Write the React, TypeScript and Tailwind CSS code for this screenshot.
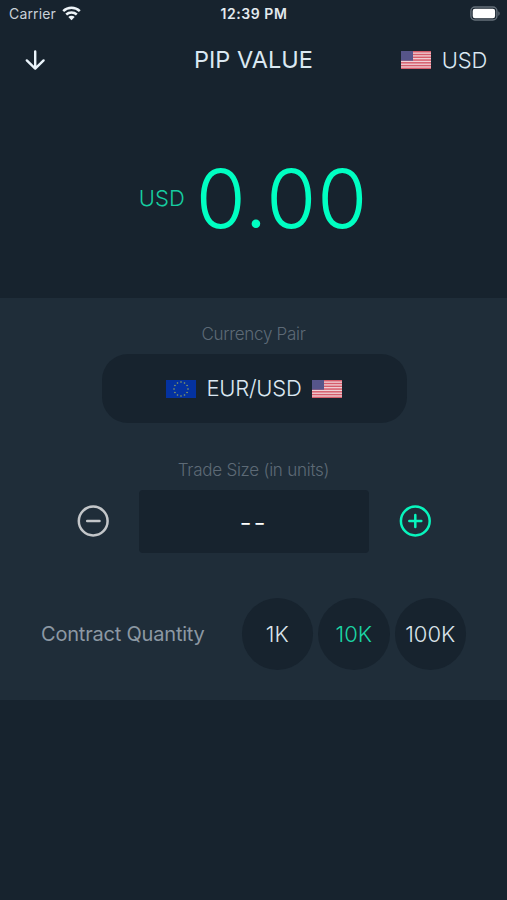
import { useState } from "react";

const quantities = ["1K", "10K", "100K"];

function UsFlag() {
  return (
    <svg width="30" height="18" viewBox="0 0 30 18" className="block shrink-0">
      <rect width="30" height="18" fill="#f0d3d8" />
      {[0, 1, 2, 3, 4, 5, 6].map((i) => (
        <rect key={i} y={i * 2.77} width="30" height="1.5" fill="#d65c6b" />
      ))}
      <rect width="12" height="9.7" fill="#56558a" />
    </svg>
  );
}

function EuFlag() {
  const stars = Array.from({ length: 12 }, (_, i) => (i * Math.PI) / 6);
  return (
    <svg width="30" height="18" viewBox="0 0 30 18" className="block shrink-0">
      <rect width="30" height="18" fill="#0432a0" />
      {stars.map((a) => (
        <circle key={a} cx={15 + 7 * Math.sin(a)} cy={9 - 7 * Math.cos(a)} r="0.8" fill="#93a35c" />
      ))}
    </svg>
  );
}

function StatusBar() {
  return (
    <div className="grid h-7 grid-cols-3 items-center pl-[9px] pr-[7px] text-[#e3eaef]">
      <div className="flex items-center gap-[6px]">
        <span className="text-[14px] leading-7 tracking-[0.15px] text-[#c9d1d8]">Carrier</span>
        <svg width="19" height="15" viewBox="0 0 19 15" fill="none" stroke="#eef4f8" strokeWidth="2.5" className="-mt-[2px]">
          <path d="M1.2 5.2a12 12 0 0 1 16.6 0" />
          <path d="M4.2 8.5a7.7 7.7 0 0 1 10.6 0" />
          <path d="M9.5 14.2L6.3 11a4.6 4.6 0 0 1 6.4 0z" fill="#eef4f8" stroke="none" />
        </svg>
      </div>
      <span className="-mx-2 pr-[1px] text-center text-[14px] font-semibold leading-7 tracking-[0.55px]">12:39 PM</span>
      <svg width="30" height="15" viewBox="0 0 30 15" className="-mt-[2px] justify-self-end">
        <rect x="0.9" y="1" width="26" height="13" rx="4" fill="none" stroke="#65707a" strokeWidth="1.4" />
        <rect x="2.7" y="2.8" width="22.4" height="9.4" rx="2.2" fill="#fff" />
        <path d="M28.3 5.2c1.8.8 1.8 3.8 0 4.6z" fill="#65707a" />
      </svg>
    </div>
  );
}

function Header() {
  return (
    <div className="grid h-16 grid-cols-[1fr_auto_1fr] items-center px-5 text-[#dbe8f2]">
      <button className="w-fit pl-[5px]">
        <svg width="21" height="21" viewBox="0 0 21 21" fill="none" stroke="#eaf4fb" strokeWidth="2.4" strokeLinecap="round" strokeLinejoin="round">
          <path d="M10.2 1.5v17M1.8 10.4l8.4 8.3 8.4-8.3" />
        </svg>
      </button>
      <h1 className="text-[23.5px] tracking-[0.05px]">PIP VALUE</h1>
      <div className="flex items-center justify-self-end gap-[11px]">
        <UsFlag />
        <span className="text-[22px] font-light tracking-[-0.25px]">USD</span>
      </div>
    </div>
  );
}

export default function App() {
  const [quantity, setQuantity] = useState("10K");

  return (
    <div className="flex h-[900px] w-[507px] flex-col bg-[#17232e] font-['Inter',sans-serif]">
      <StatusBar />
      <Header />

      <div className="flex h-[206px] items-center justify-center gap-[11px] pt-[7px] text-[#00ffc2]">
        <span className="text-[22px] font-light text-[#16cda0]">USD</span>
        <span className="pt-[2px] text-[81px] font-light leading-none tracking-[0.9px]">0.00</span>
      </div>

      <div className="flex h-[402px] flex-col items-center bg-[#1f2d39]">
        <p className="mt-[24px] h-6 text-[17px] font-light leading-6 tracking-[-0.3px] text-[#5d6a76]">Currency Pair</p>
        <button className="ml-px mt-[8px] flex h-[69px] w-[305px] items-center justify-center gap-[10px] rounded-[26px] bg-[#17232e] text-[#dbe8f2]">
          <EuFlag />
          <span className="text-[22px] font-light tracking-[-0.25px]">EUR/USD</span>
          <UsFlag />
        </button>

        <p className="mt-[35px] h-6 text-[17px] font-light leading-6 tracking-[-0.25px] text-[#5d6a76]">Trade Size (in units)</p>
        <div className="mt-[8px] flex items-center gap-[29px]">
          <button>
            <svg width="33" height="33" viewBox="0 0 33 33" fill="none" stroke="#c3c6c9" strokeWidth="2.5" strokeLinecap="round">
              <circle cx="16.2" cy="16" r="14.4" />
              <path d="M10.2 16h12.3" />
            </svg>
          </button>
          <div className="flex h-[63px] w-[230px] items-center justify-center rounded-[4px] bg-[#17232e] pt-[4px] text-[27px] font-light tracking-[1.8px] text-white">
            --
          </div>
          <button>
            <svg width="33" height="33" viewBox="0 0 33 33" fill="none" stroke="#08f5bd" strokeWidth="2.5" strokeLinecap="round">
              <circle cx="17.3" cy="16" r="14.4" />
              <path d="M11.3 16h12M17.3 10v12" />
            </svg>
          </button>
        </div>

        <div className="mt-[45px] flex w-full items-center justify-between pl-[41px] pr-[41px]">
          <span className="text-[20px] tracking-[-0.2px] text-[#8c98a3]">Contract Quantity</span>
          <div className="flex gap-[5px]">
            {quantities.map((q) => (
              <button
                key={q}
                onClick={() => setQuantity(q)}
                className={`size-[71.5px] rounded-full bg-[#17232e] pt-[2px] text-[22px] font-light ${
                  q === quantity ? "text-[#1bd6a5]" : "text-[#dbe3ea]"
                }`}
              >
                {q}
              </button>
            ))}
          </div>
        </div>
      </div>
    </div>
  );
}
